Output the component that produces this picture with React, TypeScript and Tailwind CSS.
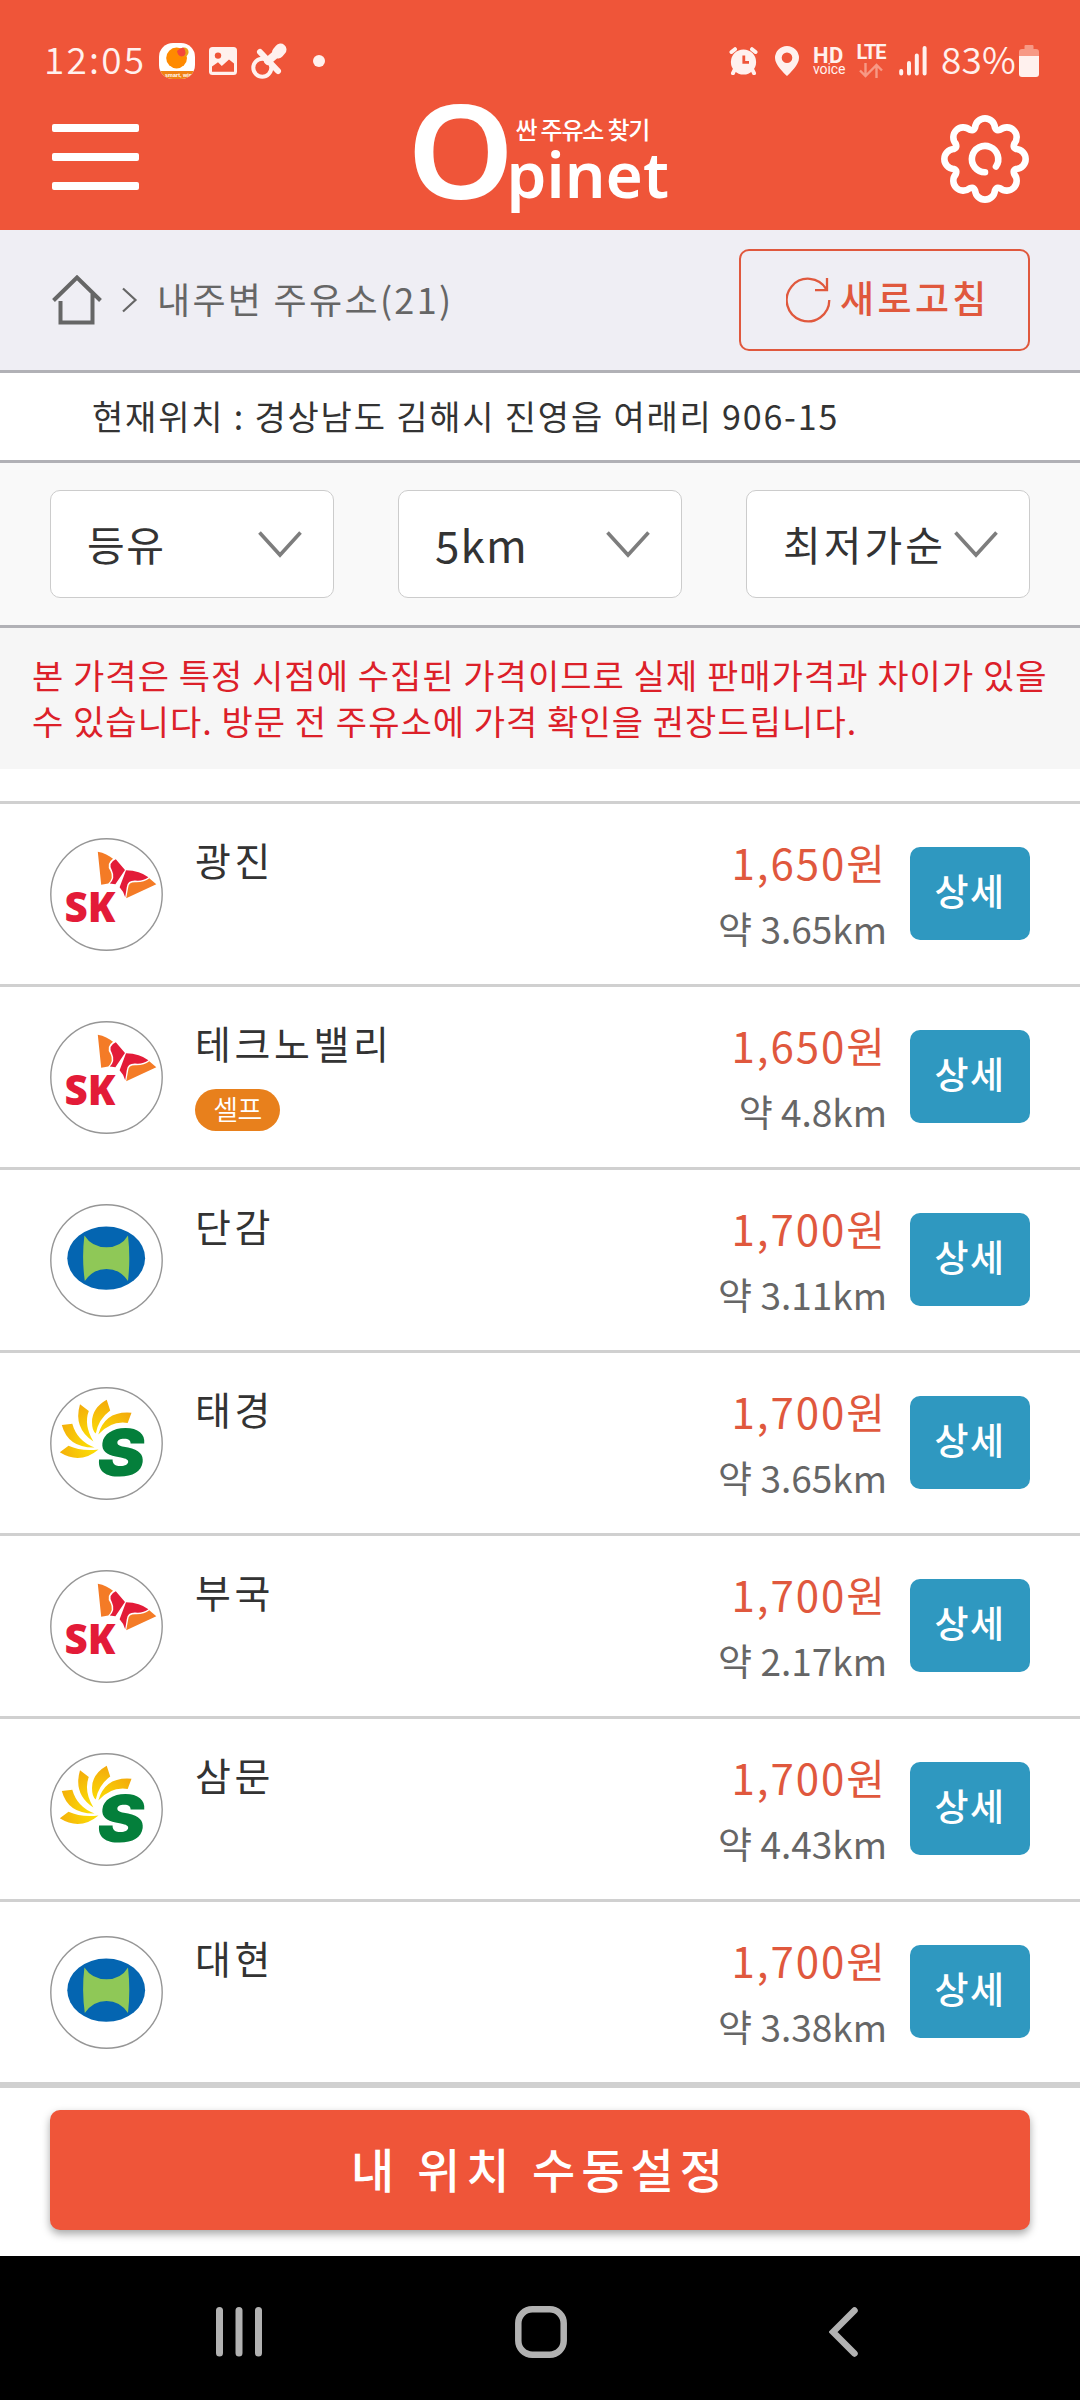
import React from "react";

type Brand = "sk" | "hd" | "soil";

interface Station {
  name: string;
  brand: Brand;
  price: string;
  distance: string;
  self?: boolean;
}

const stations: Station[] = [
  { name: "광진", brand: "sk", price: "1,650원", distance: "3.65km" },
  { name: "테크노밸리", brand: "sk", price: "1,650원", distance: "4.8km", self: true },
  { name: "단감", brand: "hd", price: "1,700원", distance: "3.11km" },
  { name: "태경", brand: "soil", price: "1,700원", distance: "3.65km" },
  { name: "부국", brand: "sk", price: "1,700원", distance: "2.17km" },
  { name: "삼문", brand: "soil", price: "1,700원", distance: "4.43km" },
  { name: "대현", brand: "hd", price: "1,700원", distance: "3.38km" },
];

function SkMark() {
  return (
    <>
      <path d="M47.8 13.7Q57 15.5 63 20.8Q55.5 26 60.5 33Q64 40 58.3 45.5L51.2 46.7Z" fill="#f47b26" />
      <path d="M65.8 21.3L75 32L65.4 46.2L59.8 45.6Q65.5 40 62 32.5Q57.5 25 65.8 21.3Z" fill="#e31b38" />
      <path d="M76 32.2Q90 32.5 98.4 39.3Q93 43.5 85 42.6Q77.5 42.5 76.8 49L75.2 59.3Q74 54 69.6 49.3Z" fill="#e31b38" />
      <path d="M99.3 40.2L106.3 46.3L76.2 60.3L78.2 49.5Q78.4 44.2 85 44.2Q94 44.6 99.3 40.2Z" fill="#f47b26" />
      <text x="14.5" y="84" fontFamily="Open Sans" fontWeight="800" fontSize="42.5" textLength="51" lengthAdjust="spacingAndGlyphs" fill="#e31b38">
        SK
      </text>
    </>
  );
}

function HyundaiMark() {
  return (
    <>
      <ellipse cx="56.2" cy="54.2" rx="38.9" ry="31.6" fill="#0465b1" />
      <path d="M34.4 31.5Q42 43.3 56.5 43.3Q71 43.3 78 31.5Q80.6 54 78 77Q70 65 56.5 65Q43 65 34.8 77Q31.6 54 34.4 31.5Z" fill="#8fc857" />
    </>
  );
}

function SoilMark() {
  return (
    <>
      <defs>
        <radialGradient id="petal" gradientUnits="userSpaceOnUse" cx="48" cy="56" r="44">
          <stop offset="0.2" stopColor="#fbdc05" />
          <stop offset="1" stopColor="#f3a90b" />
        </radialGradient>
      </defs>
      <g fill="url(#petal)">
        <path d="M56.7 12.7L60.2 23.5Q48.5 32 45.8 46.5Q42 44 42 35Q42 21 56.7 12.7Z" />
        <path d="M30 17.2L38.8 24Q33.5 38 43.4 54.5Q23 41 30 17.2Z" />
        <path d="M11.8 38L22.3 36.8Q27 54 44.5 60.5Q18 61 11.8 38Z" />
        <path d="M9.8 65.3L18.5 58.7Q31 64.5 48.5 62.4Q30 78 9.8 65.3Z" />
        <path d="M81.5 25.8L77.7 36Q61 33.5 48.3 47.6Q55 23.5 81.5 25.8Z" />
      </g>
      <text transform="translate(45 89.3) skewX(-7)" fontFamily="Inter" fontWeight="900" fontSize="65" textLength="48" lengthAdjust="spacingAndGlyphs" fill="#047f3b">
        S
      </text>
    </>
  );
}

function BrandLogo({ brand }: { brand: Brand }) {
  return (
    <svg className="block size-[113px] shrink-0" viewBox="0 0 113 113">
      <circle cx="56.5" cy="56.5" r="55.7" fill="#fff" stroke="#969696" strokeWidth="1.4" />
      {brand === "sk" && <SkMark />}
      {brand === "hd" && <HyundaiMark />}
      {brand === "soil" && <SoilMark />}
    </svg>
  );
}

function gearPath() {
  const pt = (deg: number, r: number) => {
    const a = (deg * Math.PI) / 180;
    return `${(46 + r * Math.sin(a)).toFixed(2)} ${(46 - r * Math.cos(a)).toFixed(2)}`;
  };
  let d = `M${pt(-17.5, 33)}`;
  for (let k = 0; k < 8; k++) {
    const c = k * 45;
    d += `A9.95 9.95 0 0 1 ${pt(c + 17.5, 33)}Q${pt(c + 22.5, 30)} ${pt(c + 27.5, 33)}`;
  }
  return d + "Z";
}

function GearIcon() {
  return (
    <svg className="block size-[92px]" viewBox="0 0 92 92" fill="none" stroke="#fff" strokeWidth="6.6" strokeLinecap="round" strokeLinejoin="round">
      <path d={gearPath()} />
      <path d="M46 59.3A13.2 13.2 0 1 1 57 53.5" />
    </svg>
  );
}

function StatusBar() {
  return (
    <div className="flex h-[122px] items-center pl-[44px] pr-[41px] text-[#fff1ee]">
      <span className="mt-[-5px] w-[113px] whitespace-nowrap text-[37px] font-[350] leading-none tracking-[2.2px]">12:05</span>
      <svg className="ml-[2px] h-9 w-9" viewBox="0 0 36 36">
        <defs>
          <clipPath id="app"><rect width="36" height="36" rx="14" /></clipPath>
        </defs>
        <g clipPath="url(#app)">
          <rect width="36" height="36" fill="#fff" />
          <circle cx="17.6" cy="15" r="10.4" fill="#ff8a00" />
          <circle cx="25" cy="9" r="4.6" fill="#e8a21a" />
          <path d="M18 8Q22 4 25 5Q28 10 25 13Q19 15 18 8Z" fill="#f4473a" />
          <rect y="28" width="36" height="8" fill="#f08213" />
          <text x="6" y="34" fontFamily="Liberation Sans" fontWeight="700" fontSize="5.5" fill="#fff">smart, win</text>
        </g>
      </svg>
      <svg className="ml-[14px] h-7 w-7" viewBox="0 0 28 28">
        <rect width="28" height="28" rx="3.5" fill="#fff1ee" />
        <circle cx="9" cy="8.6" r="3.2" fill="#ef5539" />
        <path d="M3 19.5L9 15.3L12.8 19L20 12.5L25 16.5V24.8H3Z" fill="#ef5539" />
      </svg>
      <svg className="ml-[14px] h-9 w-9" viewBox="0 0 36 36" fill="none" stroke="#fff1ee" strokeLinecap="round">
        <circle cx="11.3" cy="24.7" r="9" strokeWidth="4" />
        <path d="M9 9L27 28" strokeWidth="6" />
        <path d="M17 18L24.5 11.5" strokeWidth="8" />
        <path d="M27 9.5L29.5 6.5" strokeWidth="12" />
      </svg>
      <span className="ml-[26px] h-3 w-3 rounded-full bg-[#fff1ee]" />
      <div className="ml-auto flex items-center">
        <svg className="h-7 w-[29px]" viewBox="0 0 29 28">
          <circle cx="14.5" cy="15" r="12.6" fill="#fff1ee" />
          <g stroke="#fff1ee" strokeWidth="4" strokeLinecap="round">
            <path d="M2.5 5L6 2.2M26.5 5L23 2.2M5.5 23L4 26.2M23.5 23L25 26.2" />
          </g>
          <path d="M14.8 8.5V15.4H20" fill="none" stroke="#ef5539" strokeWidth="2.8" />
        </svg>
        <svg className="ml-[17px] h-[30px] w-6" viewBox="0 0 24 30">
          <path d="M12 0A12 12 0 0 1 24 12C24 19 15 27 12 30C9 27 0 19 0 12A12 12 0 0 1 12 0ZM12 6.5A5.3 5.3 0 1 0 12 17.1A5.3 5.3 0 0 0 12 6.5Z" fill="#fff1ee" />
        </svg>
        <div className="ml-[14px] w-[34px] whitespace-nowrap font-['Roboto'] leading-none">
          <div className="h-[17px] text-[22px] font-bold leading-[17px] tracking-[0.5px]">HD</div>
          <div className="h-[12px] text-[14px] leading-[10px] tracking-[-0.1px]">voice</div>
        </div>
        <div className="ml-[8px] flex h-[34px] w-8 flex-col items-center">
          <span className="h-[17px] whitespace-nowrap font-['Roboto'] text-[20px] font-bold leading-[17px] tracking-[-1px]">LTE</span>
          <svg className="mt-[2px] h-[15px] w-6" viewBox="0 0 24 15" fill="none" stroke="#f79985" strokeWidth="2.4">
            <path d="M6.5 0V13M1 7.5L6.5 13L12 7.5M17.5 15V2M12 7.5L17.5 2L23 7.5" />
          </svg>
        </div>
        <svg className="ml-[12px] h-[30px] w-[28px]" viewBox="0 0 28 30" stroke="#fff1ee" strokeWidth="4" strokeLinecap="round">
          <path d="M2.2 25V27.5M10 17V27.5M17.8 9.5V27.5M25.6 2V27.5" />
        </svg>
        <span className="ml-[14px] mt-[-5px] w-[77px] whitespace-nowrap text-[37px] font-[350] leading-none tracking-[0.2px]">83%</span>
        <svg className="ml-[1px] h-8 w-5" viewBox="0 0 20 32">
          <path d="M5.5 4V1Q5.5 0 6.5 0H13.5Q14.5 0 14.5 1V4H17Q20 4 20 7V11H0V7Q0 4 3 4Z" fill="#f79985" />
          <path d="M0 11H20V29Q20 32 17 32H3Q0 32 0 29Z" fill="#fff1ee" />
        </svg>
      </div>
    </div>
  );
}

function Header() {
  return (
    <header className="h-[230px] bg-[#ef5539]">
      <StatusBar />
      <div className="flex justify-between pl-[52px] pr-[49px]">
        <button className="mt-[2px] flex h-[66px] w-[87px] flex-col justify-between" aria-label="menu">
          <span className="h-2 w-full rounded-[2px] bg-white" />
          <span className="h-2 w-full rounded-[2px] bg-white" />
          <span className="h-2 w-full rounded-[2px] bg-white" />
        </button>
        <div className="mt-[-24px] flex h-[110px] w-[265px] text-white">
          <span className="mt-[-3px] w-[100px] font-['Noto_Sans'] text-[130px] font-semibold leading-[108px] tracking-[-8px]">
            <span className="inline-block origin-left scale-x-[1.05]">O</span>
          </span>
          <div className="flex flex-col">
            <span className="ml-[9px] mt-[18px] whitespace-nowrap text-[24px] font-medium leading-[26px] tracking-[-1.2px]">싼 주유소 찾기</span>
            <span className="mt-[2px] whitespace-nowrap font-['Noto_Sans'] text-[64px] font-semibold leading-[60px]">pinet</span>
          </div>
        </div>
        <button className="mt-[-9px] h-[92px] w-[92px]" aria-label="settings">
          <GearIcon />
        </button>
      </div>
    </header>
  );
}

function SelectBox({ label, className }: { label: string; className: string }) {
  return (
    <button className="flex h-[108px] w-[284px] items-center justify-between rounded-[10px] border border-[#ccc] bg-white pl-[36px] pr-[31px] text-[#333]">
      <span className={className}>{label}</span>
      <svg className="h-[27px] w-[44px] shrink-0" viewBox="0 0 44 27" fill="none" stroke="#7d7d7d" strokeWidth="3.6">
        <path d="M1.5 1.5L22 24L42.5 1.5" />
      </svg>
    </button>
  );
}

function StationRow({ s }: { s: Station }) {
  return (
    <li className="flex h-[183px] border-t-[3px] border-[#d0d0d0] px-[50px] pt-[34px]">
      <BrandLogo brand={s.brand} />
      <div className="ml-[32px] flex flex-col items-start">
        <span className="mt-[-1px] whitespace-nowrap text-[39px] leading-[44px] tracking-[3.6px] text-[#333]">{s.name}</span>
        {s.self && (
          <span className="mt-[25px] flex h-[42px] w-[85px] items-center justify-center rounded-[21px] bg-[#e8801c] pb-[3px] text-[27px] font-[350] leading-none tracking-[-0.5px] text-white">
            셀프
          </span>
        )}
      </div>
      <div className="ml-auto flex flex-col items-end">
        <span className="whitespace-nowrap text-[42px] leading-[48px] tracking-[2px] text-[#e0583d]">{s.price}</span>
        <span className="mt-[22px] whitespace-nowrap text-[37px] leading-[40px] text-[#666]">약 {s.distance}</span>
      </div>
      <button className="ml-[23px] mt-[9px] h-[93px] w-[120px] rounded-[10px] bg-[#2f98c0] pb-[6px] text-[37px] font-medium leading-none tracking-[1.5px] text-white">
        상세
      </button>
    </li>
  );
}

export default function App() {
  return (
    <div className="flex h-[2400px] w-[1080px] flex-col overflow-hidden bg-white font-['Noto_Sans_CJK_KR',sans-serif]">
      <Header />

      <div className="flex h-[143px] items-center border-b-[3px] border-[#b1b1b6] bg-[#efeef4] px-[50px]">
        <svg className="ml-[2px] h-[50px] w-[51px]" viewBox="0 0 51 50" fill="none" stroke="#666" strokeWidth="4">
          <path d="M1.5 25.5L25 2.5L48.5 25.5M8.5 26V47.5H40.5V19" />
        </svg>
        <svg className="ml-[18px] h-[26px] w-[17px]" viewBox="0 0 17 26" fill="none" stroke="#666" strokeWidth="2.2">
          <path d="M2 1.5L14.5 13L2 24.5" />
        </svg>
        <span className="ml-[19px] mt-[-4px] whitespace-nowrap text-[36px] leading-none tracking-[2.3px] text-[#666]">내주변 주유소(21)</span>
        <button className="ml-auto flex h-[102px] w-[291px] items-center rounded-[10px] border-2 border-[#e0583d] pl-[45px] text-[#e0583d]">
          <svg className="h-[46px] w-[46px]" viewBox="0 0 46 46" fill="none" stroke="currentColor" strokeWidth="2.3">
            <path d="M43.3 23A21.3 21.3 0 1 1 40.4 12.3M41 1V13.2H29" />
          </svg>
          <span className="ml-[8px] mt-[-5px] whitespace-nowrap text-[37px] font-medium leading-none tracking-[3.4px]">새로고침</span>
        </button>
      </div>

      <div className="flex h-[90px] items-center border-b-[3px] border-[#b1b1b6] bg-white pl-[92px]">
        <span className="mt-[-2px] whitespace-nowrap text-[34px] leading-none tracking-[1.8px] text-[#333]">현재위치 : 경상남도 김해시 진영읍 여래리 906-15</span>
      </div>

      <div className="flex h-[165px] items-center justify-between border-b-[3px] border-[#b1b1b6] bg-[#f9f9f9] px-[50px]">
        <SelectBox label="등유" className="whitespace-nowrap text-[41px] leading-[50px] mt-[-3px] tracking-[1.5px]" />
        <SelectBox label="5km" className="whitespace-nowrap text-[44px] leading-[50px] tracking-[1.2px]" />
        <SelectBox label="최저가순" className="whitespace-nowrap text-[41px] leading-[50px] mt-[-3px] tracking-[3px]" />
      </div>

      <p className="h-[141px] bg-[#f6f6f6] pl-[32px] pt-[24px] text-[34px] leading-[46px] tracking-[1.05px] text-[#dc2029]">
        <span className="block whitespace-nowrap">본 가격은 특정 시점에 수집된 가격이므로 실제 판매가격과 차이가 있을</span>
        <span className="block whitespace-nowrap">수 있습니다. 방문 전 주유소에 가격 확인을 권장드립니다.</span>
      </p>

      <ul className="mt-[32px]">
        {stations.map((s) => (
          <StationRow key={s.name} s={s} />
        ))}
      </ul>

      <div className="h-[174px] border-t-[6px] border-[#d0d0d0] px-[50px] pt-[22px]">
        <button className="h-[120px] w-full rounded-[10px] bg-[#ef5539] pb-[6px] text-[47px] font-medium leading-none tracking-[6px] text-white shadow-[0_4px_8px_rgba(0,0,0,0.35)]">
          내 위치 수동설정
        </button>
      </div>

      <nav className="flex h-[144px] items-center bg-black pt-[8px]">
        <svg className="ml-[216px] h-[50px] w-[46px]" viewBox="0 0 46 50" stroke="#b2b2b2" strokeWidth="7" strokeLinecap="round">
          <path d="M3.5 3.5V46M23 3.5V46M42.5 3.5V46" />
        </svg>
        <svg className="ml-[253px] h-[52px] w-[52px]" viewBox="0 0 52 52" fill="none" stroke="#b2b2b2" strokeWidth="6.5">
          <rect x="3.3" y="3.3" width="45.4" height="45.4" rx="14" />
        </svg>
        <svg className="ml-[262px] h-[50px] w-[30px]" viewBox="0 0 30 50" fill="none" stroke="#b2b2b2" strokeWidth="6.5" strokeLinecap="round">
          <path d="M25.5 3.5L4 25L25.5 46.5" />
        </svg>
      </nav>
    </div>
  );
}
